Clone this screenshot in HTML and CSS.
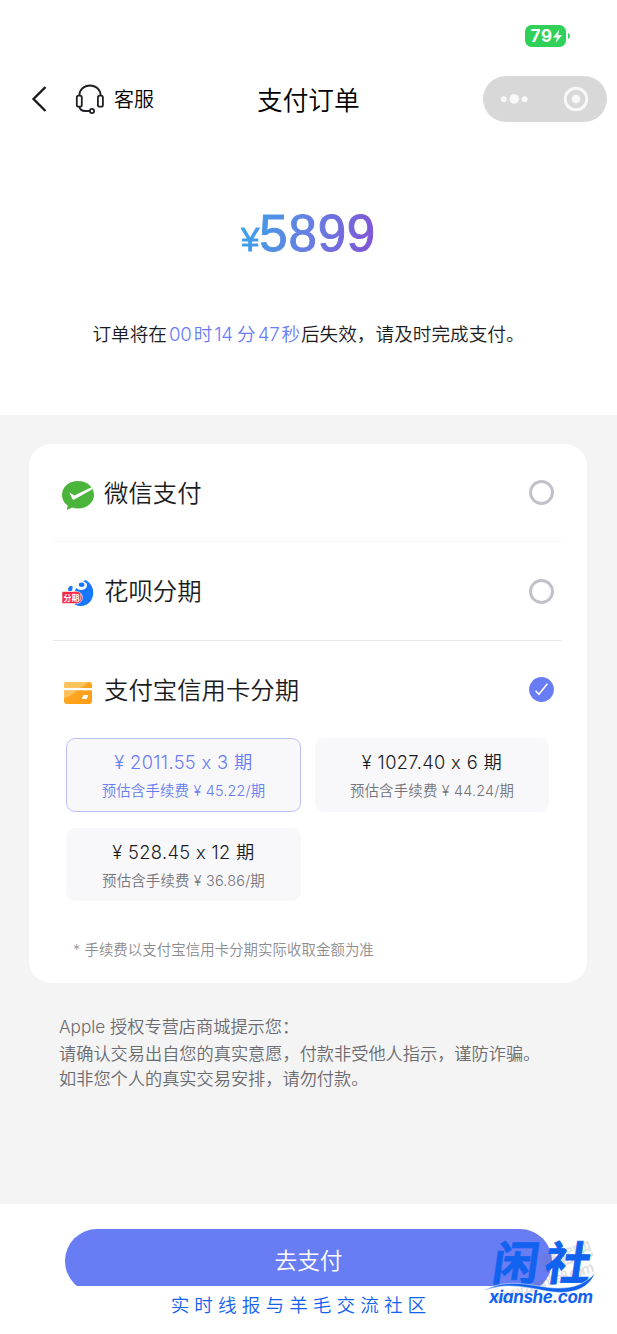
FILE: index.html
```html
<!DOCTYPE html>
<html lang="zh-CN">
<head>
<meta charset="utf-8">
<title>支付订单</title>
<link rel="stylesheet" href="styles.css">
</head>
<body>
<div class="page">
  <div class="status">
    <svg class="battery" width="46" height="22" viewBox="0 0 46 22">
      <rect width="41" height="22" rx="6.5" fill="#30d158"/>
      <path d="M43 8q2 .8 2 3t-2 3z" fill="#30d158"/>
      <text class="battery-text" x="5.5" y="17" textLength="21.5">79</text>
      <path d="M34.5 4.5 28 12.4h4L30.6 18 37 10h-4z" fill="#fff"/>
    </svg>
  </div>
  <header class="nav">
    <div class="nav-left">
      <svg class="back" width="16" height="28" viewBox="0 0 16 28"><path d="M14.500 2 2.500 14l12 12" fill="none" stroke="#17181a" stroke-width="2.3"/></svg>
      <svg class="headset" width="30" height="31" viewBox="0 0 30 31" fill="none" stroke="#202124" stroke-width="1.800">
        <path d="M4.300 11.500C4.500 5.500 9 1.500 15 1.500s10.500 4 10.700 10M4.300 22.500c.5 3 2.400 4.500 6 4.500h4.500"/>
        <rect x="1.800" y="11.700" width="5" height="11" rx="1.800"/><rect x="22.900" y="11.700" width="5" height="11" rx="1.800"/>
        <circle cx="17" cy="27" r="2.100"/>
      </svg>
      <span class="service">客服</span>
    </div>
    <h1 class="title">支付订单</h1>
    <svg class="capsule" width="124" height="46" viewBox="0 0 124 46">
      <rect width="124" height="46" rx="23" fill="#d8d8d8"/>
      <g fill="#f8f8f8"><circle cx="20.800" cy="23.200" r="2.900"/><circle cx="31.300" cy="22.900" r="4.800"/><circle cx="41.700" cy="23.200" r="2.900"/><circle cx="93" cy="23" r="4.400"/></g>
      <circle cx="93" cy="23" r="10.800" fill="none" stroke="#f8f8f8" stroke-width="2.900"/>
    </svg>
  </header>
  <section class="hero">
    <div class="price"><span class="yen">¥</span><span class="amount">5899</span></div>
    <p class="countdown"><span>订单将在</span><span class="timer"><i class="num">00</i><i>时</i><i class="num">14</i><i class="minute">分</i><i class="num">47</i><i>秒</i></span><span>后失效，请及时完成支付。</span></p>
  </section>
  <main class="main">
    <section class="card">
      <div class="method">
        <svg class="icon" width="34" height="34" viewBox="0 0 34 34">
          <path d="M17 3C8 3 1 9 1 17c0 4.300 2.200 8 5.600 10.500L6 32l5-2.600c2 .7 4 1 6 1 9 0 16-6 16-13.700S26 3 17 3z" fill="#4bb43b"/>
          <path d="m8.300 14.200 5 3.400L31 9v2.500L13.300 21.500q-1.500.8-2.200-.9z" fill="#fff"/>
        </svg>
        <span class="name">微信支付</span><span class="radio"></span>
      </div>
      <div class="method method-second">
        <svg class="icon" width="34" height="34" viewBox="0 0 34 34">
          <path d="M24.500 4C30 7 32.500 12 32.200 17.500 31.800 25 26.500 30 20 30c-4 0-8-2-9-5l4-13c3 3 10 2.500 11-2 .6-3-2-4.500-4.500-4.500z" fill="#1677ff"/>
          <ellipse cx="20.600" cy="8.700" rx="2.800" ry="2.200" fill="#1677ff"/>
          <path d="M8 15c-2-1.500-.5-5 2.300-5.300 2.200 0 1.500 4 0 5.300zm7-3q3 3.500 8 2.300l-4 3z" fill="#1677ff"/>
          <path d="M1 15.500h14.500a6 6 0 0 1 0 12H1z" fill="#fa2948" stroke="#fff" stroke-width=".6"/>
          <path d="M19.600 18q1.200 3.500-1 7" fill="none" stroke="#fff" stroke-width=".7"/>
          <text class="badge-text" x="2.500" y="24.700" textLength="16">分期</text>
        </svg>
        <span class="name">花呗分期</span><span class="radio"></span>
      </div>
      <div class="method method-third">
        <svg class="icon" width="34" height="34" viewBox="0 0 34 34">
          <defs><linearGradient id="gold" x2="1" y2="1"><stop stop-color="#ffad30"/><stop offset="1" stop-color="#ff9c10"/></linearGradient></defs>
          <rect x="3" y="7" width="28" height="22" rx="3" fill="url(#gold)"/>
          <path d="M3 13v-3q0-3 3-3h21q-3 4-8 6zM3 15.300h13Q11 21 3 23z" fill="#ffc35e"/>
          <path d="M3 13h28v2.200H3zM22.300 20h5l-1.500 4h-5z" fill="#fff"/>
        </svg>
        <span class="name">支付宝信用卡分期</span>
        <svg class="checked" width="25" height="25" viewBox="0 0 25 25"><circle cx="12.500" cy="12.500" r="12.400" fill="#687cf3"/><path d="m6.500 13.800 3.400 3.500 8.500-10.500" fill="none" stroke="#fff" stroke-width="1.500"/></svg>
      </div>
      <div class="plans">
        <div class="plan selected"><div class="sum">¥ 2011.55 x 3 期</div><div class="fee">预估含手续费 ¥ 45.22/期</div></div>
        <div class="plan"><div class="sum">¥ 1027.40 x 6 期</div><div class="fee">预估含手续费 ¥ 44.24/期</div></div>
        <div class="plan"><div class="sum">¥ 528.45 x 12 期</div><div class="fee">预估含手续费 ¥ 36.86/期</div></div>
      </div>
      <p class="note">* 手续费以支付宝信用卡分期实际收取金额为准</p>
    </section>
    <section class="tips">
      <p class="tips-head">Apple 授权专营店商城提示您：</p>
      <p>请确认交易出自您的真实意愿，付款非受他人指示，谨防诈骗。</p>
      <p>如非您个人的真实交易安排，请勿付款。</p>
    </section>
  </main>
  <footer class="footer">
    <div class="button-area"><div class="pay">去支付</div></div>
    <div class="tagline">实时线报与羊毛交流社区</div>
    <svg class="brand" width="137" height="84" viewBox="0 0 137 84">
      <g class="ghost" transform="rotate(-18 75 30)"><text x="66" y="18" font-size="19" textLength="54">赚客吧</text><text x="10" y="34" font-size="14" textLength="106">www.zuanke8.com</text></g>
      <g transform="translate(11 30) skewX(-8)"><text class="brand-name" textLength="98">闲社</text></g>
      <path d="M3 41C24 29 45 34 65 37c21 3 38 0 50-14-7 18-27 22-49 18C45 37 25 32 3 41z" fill="#1262f0" stroke="#fff" stroke-width=".5"/>
      <text class="brand-url" x="9" y="53" textLength="104">xianshe.com</text>
    </svg>
  </footer>
</div>
</body>
</html>
```
FILE: styles.css
```css
* { box-sizing: border-box; }
body { margin: 0; background: #fff; color: #1c1c1e; font-family: Inter, "Noto Sans CJK SC DemiLight", "Noto Sans CJK SC", sans-serif; font-weight: 350; font-feature-settings: "calt" 0; }
p, h1 { margin: 0; font-weight: inherit; }
i { font-style: normal; }
.page { width: 617px; height: 1334px; display: flex; flex-direction: column; overflow: hidden; }
.status { height: 76px; padding: 25px 46px 0 0; display: flex; justify-content: flex-end; }
.battery { display: block; }
.battery-text { font: 700 17px Inter, sans-serif; fill: #fff; }
.nav { height: 46px; display: grid; grid-template-columns: 226px 104px 1fr; align-items: center; padding: 0 10px 0 31px; }
.nav-left { display: flex; align-items: center; }
.headset { margin-left: 28px; }
.service { font-size: 20px; line-height: 30px; padding-top: 2px; margin-left: 9px; color: #000; }
.title { font-size: 25.700px; line-height: 38px; padding-top: 3px; white-space: nowrap; color: #000; }
.capsule { justify-self: end; }
.hero { height: 293px; display: flex; flex-direction: column; align-items: center; padding-top: 80px; }
.price { height: 64px; display: flex; align-items: baseline; line-height: 64px; background: linear-gradient(100deg, #3fa0e8 5%, #667ee2 50%, #8056d4 95%); background-clip: text; color: transparent; font-family: "Liberation Sans", sans-serif; -webkit-text-stroke: 1px transparent; }
.yen { font-size: 33px; }
.amount { font-size: 51px; letter-spacing: .800px; }
.countdown { margin-top: 54px; height: 28px; display: flex; font-size: 18.650px; line-height: 28px; white-space: nowrap; }
.timer { width: 134px; padding: 0 1px 0 2px; color: #687cf3; display: flex; justify-content: space-between; letter-spacing: -.300px; }
.minute { margin-left: 2px; }
.main { height: 789px; background: #f4f4f4; padding: 29px 30px 0 29px; }
.card { height: 539px; background: #fff; border-radius: 22px; padding: 0 25px 0 24px; }
.method { height: 98px; display: flex; align-items: center; padding: 0 8px 0 8px; border-bottom: 1px solid #f7f7f7; }
.method-second { height: 99px; border-color: #e9e9e9; }
.method-third { height: 97px; border: 0; }
.icon { margin-top: 4px; }
.name { font-size: 24.400px; line-height: 36px; margin-left: 9px; flex: 1; }
.radio { width: 25px; height: 25px; border: 3px solid #c2c1ca; border-radius: 50%; }
.plans { display: grid; grid-template-columns: 235px 234px; gap: 16px 14px; padding-left: 13px; }
.plan { height: 73.500px; border-radius: 9px; background: #f8f8fa; text-align: center; padding-top: 10px; border: 1px solid transparent; white-space: nowrap; }
.selected { color: #687cf3; border-color: #b9c2fb; }
.sum { font-size: 18.300px; line-height: 27px; letter-spacing: .350px; }
.fee { font-size: 14.400px; line-height: 22px; margin-top: 4px; color: #74747a; letter-spacing: .200px; }
.selected .fee { color: inherit; }
.note { margin: 38px 0 0 20px; font-size: 14.400px; line-height: 22px; color: #8c8c90; letter-spacing: .080px; }
.tips { padding: 31px 0 0 30px; font-size: 17.200px; line-height: 25px; color: #6b6b70; white-space: nowrap; }
.tips-head { margin-bottom: 2px; }
.footer { height: 130px; position: relative; }
.button-area { height: 82px; padding: 25px 65px 0; overflow: hidden; }
.pay { height: 64px; border-radius: 32px; background: #687cf3; color: #fff; text-align: center; font-size: 22.700px; line-height: 64px; font-weight: 400; }
.tagline { text-align: center; color: #1262f0; font-size: 18.600px; line-height: 38px; letter-spacing: 5.100px; padding-right: 32px; padding-left: 17px; font-weight: 400; }
.brand { position: absolute; left: 480px; top: 46px; overflow: visible; }
.brand-name { font: 700 46px "Noto Sans CJK SC", sans-serif; fill: #1262f0; stroke: #1262f0; stroke-width: .8px; }
.brand-url { font: italic 700 17px Inter, sans-serif; fill: #1262f0; }
.ghost { font-family: "Noto Sans CJK SC", sans-serif; font-weight: 700; fill: #777; opacity: .22; }
.badge-text { font: 700 8px "Noto Sans CJK SC", sans-serif; fill: #fff; }
```
